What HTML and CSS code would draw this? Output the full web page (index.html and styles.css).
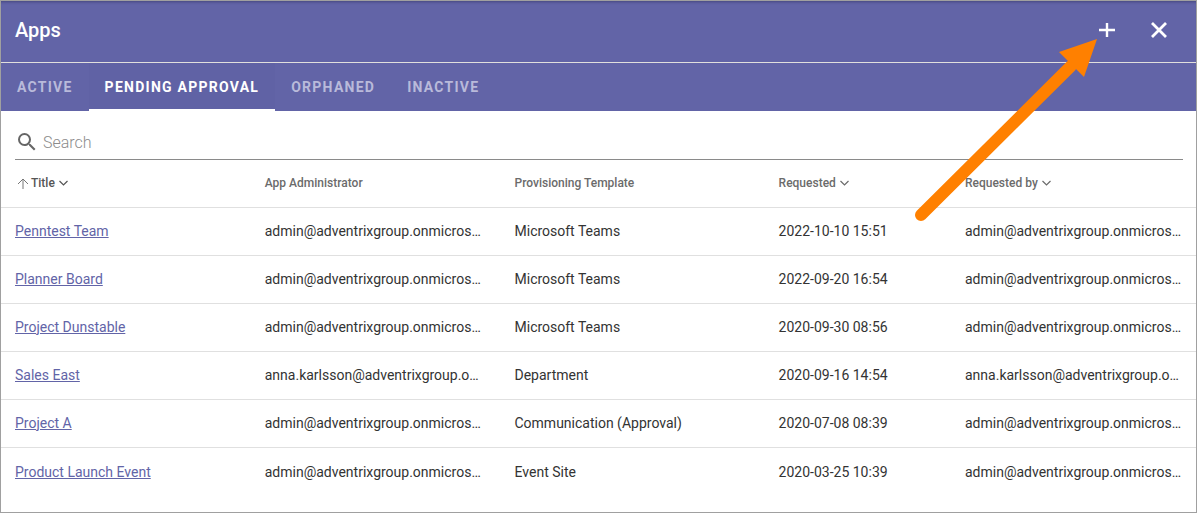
FILE: index.html
```html
<!DOCTYPE html>
<html lang="en">
<head>
<meta charset="utf-8">
<title>Apps</title>
<link rel="stylesheet" href="styles.css">
</head>
<body>
<main class="panel">
  <header class="header">
    <h1 class="title">Apps</h1>
    <div class="actions">
      <button class="icon-button" type="button" aria-label="Add app">
        <svg width="24" height="24" viewBox="0 0 24 24"><path d="M12 5v14M4 12h16" fill="none" stroke="currentColor" stroke-width="2.4"/></svg>
      </button>
      <button class="icon-button" type="button" aria-label="Close">
        <svg width="24" height="24" viewBox="0 0 24 24"><path d="M5 5l14 14M19 5L5 19" fill="none" stroke="currentColor" stroke-width="2.8"/></svg>
      </button>
    </div>
  </header>
  <nav class="tabs" role="tablist">
    <button class="tab" type="button" role="tab">ACTIVE</button>
    <button class="tab tab-selected" type="button" role="tab" aria-selected="true">PENDING APPROVAL</button>
    <button class="tab" type="button" role="tab">ORPHANED</button>
    <button class="tab" type="button" role="tab">INACTIVE</button>
  </nav>
  <label class="search">
    <svg class="search-icon" width="24" height="24" viewBox="0 0 24 24"><path fill="currentColor" d="M15.5 14h-.79l-.28-.27A6.47 6.47 0 0 0 16 9.500 6.500 6.500 0 1 0 9.500 16c1.610 0 3.090-.59 4.230-1.570l.27.28v.79l5 4.990L20.490 19l-4.990-5zm-6 0C7.010 14 5 11.990 5 9.500S7.010 5 9.500 5 14 7.010 14 9.500 11.990 14 9.500 14z"/></svg>
    <input class="search-input" type="search" placeholder="Search" aria-label="Search">
  </label>
  <table class="apps">
    <colgroup>
      <col class="col-title"><col class="col-admin"><col class="col-template"><col class="col-requested"><col class="col-by">
    </colgroup>
    <thead>
      <tr>
        <th aria-sort="ascending"><button class="sort sort-active" type="button"><svg class="arrow" width="16" height="12" viewBox="0 0 16 12"><path d="M8 12V2M3 7l5-5 5 5" fill="none" stroke="currentColor"/></svg>Title<svg class="chevron" width="9" height="6" viewBox="0 0 9 6"><path d="M.5 1l4 4 4-4" fill="none" stroke="currentColor" stroke-width="1.2"/></svg></button></th>
        <th>App Administrator</th>
        <th>Provisioning Template</th>
        <th><button class="sort" type="button">Requested<svg class="chevron" width="9" height="6" viewBox="0 0 9 6"><path d="M.5 1l4 4 4-4" fill="none" stroke="currentColor" stroke-width="1.2"/></svg></button></th>
        <th><button class="sort" type="button">Requested by<svg class="chevron" width="9" height="6" viewBox="0 0 9 6"><path d="M.5 1l4 4 4-4" fill="none" stroke="currentColor" stroke-width="1.2"/></svg></button></th>
      </tr>
    </thead>
    <tbody>
      <tr><td><a href="#">Penntest Team</a></td><td>admin@adventrixgroup.onmicros…</td><td>Microsoft Teams</td><td>2022-10-10 15:51</td><td>admin@adventrixgroup.onmicros…</td></tr>
      <tr><td><a href="#">Planner Board</a></td><td>admin@adventrixgroup.onmicros…</td><td>Microsoft Teams</td><td>2022-09-20 16:54</td><td>admin@adventrixgroup.onmicros…</td></tr>
      <tr><td><a href="#">Project Dunstable</a></td><td>admin@adventrixgroup.onmicros…</td><td>Microsoft Teams</td><td>2020-09-30 08:56</td><td>admin@adventrixgroup.onmicros…</td></tr>
      <tr><td><a href="#">Sales East</a></td><td>anna.karlsson@adventrixgroup.o…</td><td>Department</td><td>2020-09-16 14:54</td><td>anna.karlsson@adventrixgroup.o…</td></tr>
      <tr><td><a href="#">Project A</a></td><td>admin@adventrixgroup.onmicros…</td><td>Communication (Approval)</td><td>2020-07-08 08:39</td><td>admin@adventrixgroup.onmicros…</td></tr>
      <tr><td><a href="#">Product Launch Event</a></td><td>admin@adventrixgroup.onmicros…</td><td>Event Site</td><td>2020-03-25 10:39</td><td>admin@adventrixgroup.onmicros…</td></tr>
    </tbody>
  </table>
  <svg class="pointer" width="184" height="184" viewBox="0 0 184 184" aria-hidden="true">
    <path d="M8 176L158 27" stroke="#ff8000" stroke-width="12" stroke-linecap="round"/>
    <path d="M184 0L146 13L171 38Z" fill="#ff8000"/>
  </svg>
</main>
</body>
</html>
```
FILE: styles.css
```css
* {
  box-sizing: border-box;
}

body {
  margin: 0;
  background: #fff;
  color: #333;
  font: 14px/20px Roboto, "Liberation Sans", sans-serif;
}

button {
  border: 0;
  padding: 0;
  background: none;
  color: inherit;
  font: inherit;
  cursor: pointer;
}

svg {
  flex: none;
}

.panel {
  position: relative;
  min-height: 100vh;
  border: 1px solid #a0a0a0;
}

.header {
  display: flex;
  align-items: center;
  justify-content: space-between;
  height: 62px;
  padding: 0 25px 4px 14px;
  border-bottom: 1px solid #e1dfdd;
  background: #6264a7;
  color: #fff;
  box-shadow: inset 0 3px 3px -2px #44467d;
}

.title {
  margin: 0;
  font-size: 20px;
  font-weight: 500;
  line-height: 28px;
}

.actions {
  display: flex;
  gap: 28px;
}

.icon-button {
  display: flex;
}

.tabs {
  display: flex;
  background: #6264a7;
}

.tab {
  height: 48px;
  padding: 2px 16px 0;
  border-bottom: 2px solid transparent;
  color: #b9bada;
  font-weight: 700;
  letter-spacing: 0.09em;
}

.tab-selected {
  border-bottom-color: #fff;
  background: #6062a5;
  color: #fff;
}

.search {
  display: flex;
  align-items: center;
  height: 35px;
  margin: 14px 13px 0 14px;
  border-bottom: 1px solid #8a8a8a;
  color: #666;
}

.search-input {
  flex: 1;
  min-width: 0;
  border: 0;
  padding: 2px 4px 0;
  outline: 0;
  background: none;
  color: #333;
  font: 300 16px/24px Roboto, "Liberation Sans", sans-serif;
}

.search-input::placeholder {
  color: #8c8c8c;
}

.apps {
  width: 100%;
  border-spacing: 0;
  table-layout: fixed;
}

.col-title,
.col-admin {
  width: 20.9%;
}

.col-template {
  width: 22.1%;
}

.col-requested {
  width: 15.6%;
}

.apps th,
.apps td {
  height: 48px;
  padding: 0 14px 2px;
  overflow: hidden;
  border-bottom: 1px solid #e0e0e0;
  text-align: left;
  text-overflow: ellipsis;
  white-space: nowrap;
}

.apps tbody tr:last-child td {
  padding-bottom: 0;
  border-bottom: 0;
}

.apps th {
  color: #6b6b6b;
  font-size: 12px;
  font-weight: 500;
}

.apps a {
  color: #6264a7;
  text-underline-offset: 1px;
}

.sort {
  display: flex;
  align-items: center;
}

.sort-active {
  color: #555;
}

.arrow {
  color: #777;
}

.chevron {
  margin-left: 4px;
}

.pointer {
  position: absolute;
  top: 38px;
  right: 99px;
}
```
